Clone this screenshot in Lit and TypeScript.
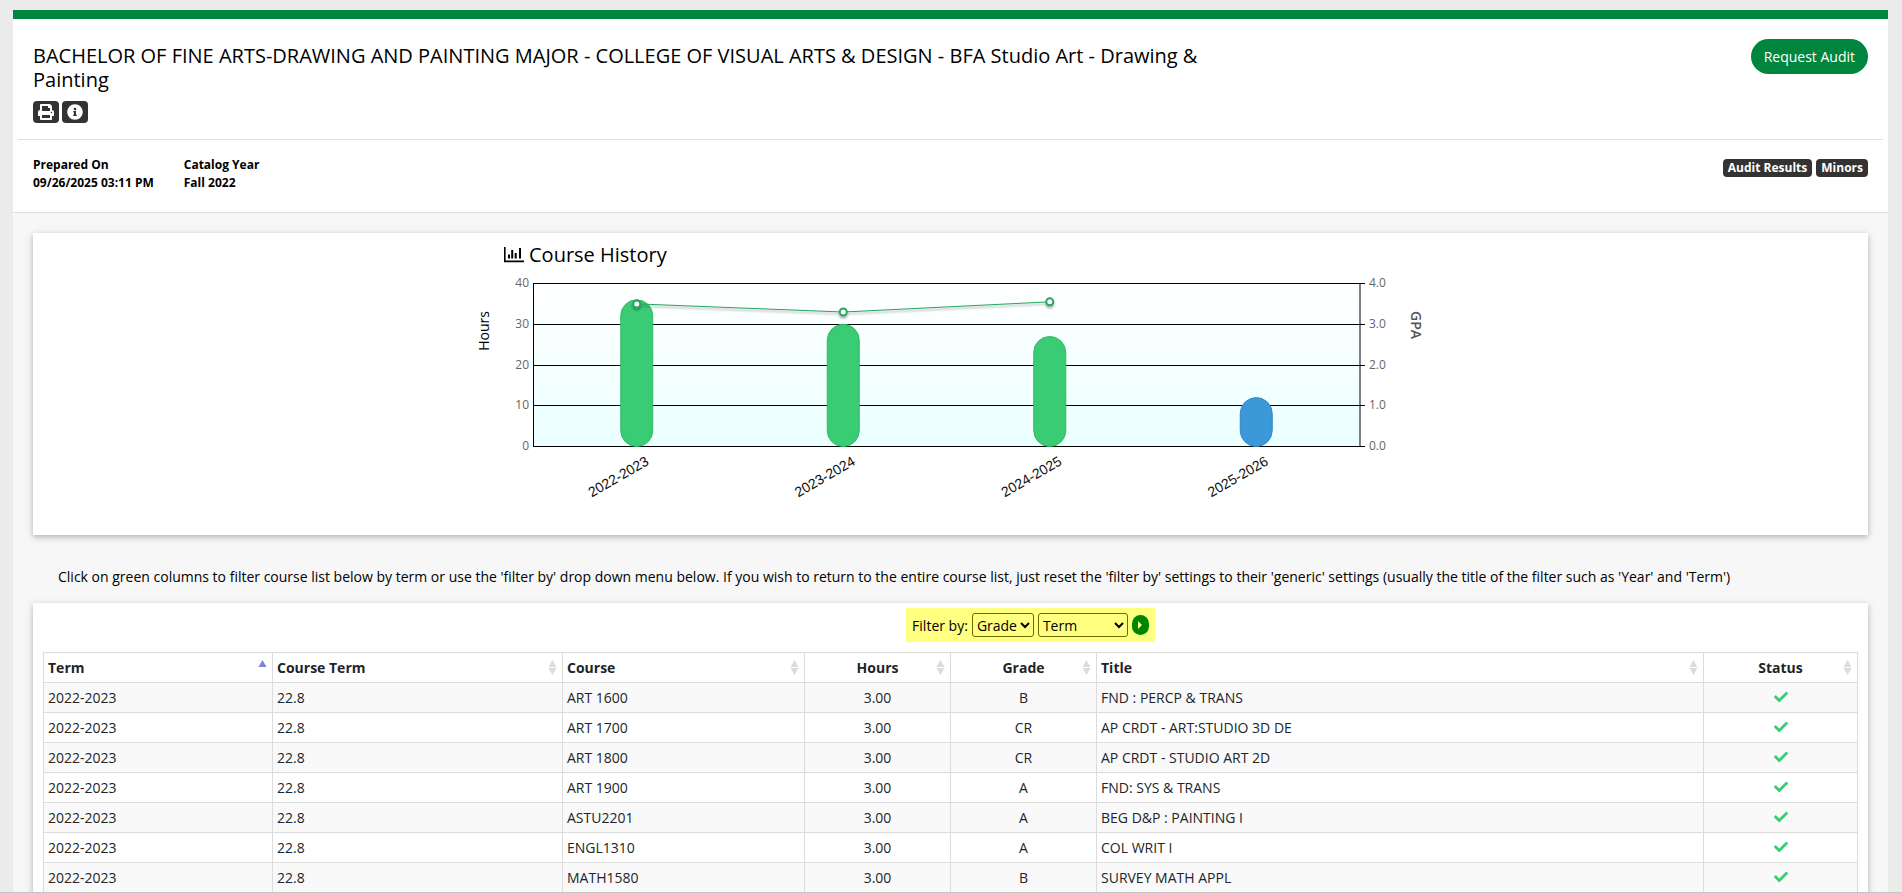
import { LitElement, html, svg, css } from "lit";
import { customElement, state } from "lit/decorators.js";
import { classMap } from "lit/directives/class-map.js";

interface Course {
  term: string;
  courseTerm: string;
  course: string;
  hours: string;
  grade: string;
  title: string;
}

interface YearBar {
  year: string;
  hours: number;
  gpa: number | null;
  current: boolean;
}

const course = (name: string, grade: string, title: string): Course => ({
  term: "2022-2023",
  courseTerm: "22.8",
  course: name,
  hours: "3.00",
  grade,
  title,
});

const COURSES: Course[] = [
  course("ART 1600", "B", "FND : PERCP & TRANS"),
  course("ART 1700", "CR", "AP CRDT - ART:STUDIO 3D DE"),
  course("ART 1800", "CR", "AP CRDT - STUDIO ART 2D"),
  course("ART 1900", "A", "FND: SYS & TRANS"),
  course("ASTU2201", "A", "BEG D&P : PAINTING I"),
  course("ENGL1310", "A", "COL WRIT I"),
  course("MATH1580", "B", "SURVEY MATH APPL"),
];

const COLUMNS = [
  { key: "term", label: "Term", centered: false },
  { key: "course-term", label: "Course Term", centered: false },
  { key: "course", label: "Course", centered: false },
  { key: "hours", label: "Hours", centered: true },
  { key: "grade", label: "Grade", centered: true },
  { key: "title", label: "Title", centered: false },
  { key: "status", label: "Status", centered: true },
];

const YEARS: YearBar[] = [
  { year: "2022-2023", hours: 36, gpa: 3.5, current: false },
  { year: "2023-2024", hours: 30, gpa: 3.3, current: false },
  { year: "2024-2025", hours: 27, gpa: 3.55, current: false },
  { year: "2025-2026", hours: 12, gpa: null, current: true },
];

/** Combined chart: hours per year as rounded bars, GPA as a line. */
@customElement("course-chart")
export class CourseChart extends LitElement {
  static styles = css`
    :host {
      display: block;
      font-family: "Open Sans", sans-serif;
    }
    .plot {
      display: block;
      width: 100%;
      height: auto;
    }
    .grid {
      stroke: #000;
      stroke-width: 1;
    }
    .tick {
      font-size: 12px;
      fill: #666;
    }
    .axis-title {
      font-size: 14px;
      fill: #000;
    }
    .axis-title.side {
      fill: #555;
      font-weight: 600;
    }
    .year {
      font-family: "Liberation Sans", Arial, sans-serif;
      font-size: 14px;
      fill: #111;
    }
    .bar {
      fill: #3acc74;
      stroke: #33b768;
      cursor: pointer;
    }
    .bar.current {
      fill: #3b99d9;
      stroke: #3089c8;
    }
    .line {
      fill: none;
      stroke: #27a45b;
      stroke-width: 1;
    }
    .dot {
      fill: #fff;
      stroke: #27a45b;
      stroke-width: 2;
    }
  `;

  private readonly left = 63;
  private readonly right = 890;
  private readonly top = 13;
  private readonly bottom = 176;

  private y(share: number) {
    return this.bottom + 0.5 - share * (this.bottom - this.top);
  }

  private x(index: number) {
    const step = (this.right - this.left - 1) / YEARS.length;
    return this.left + 0.5 + step * (index + 0.5);
  }

  render() {
    const graded = YEARS.map((d, i) => ({ x: this.x(i), gpa: d.gpa })).filter(
      (d) => d.gpa !== null
    );
    const points = graded.map((d) => `${d.x},${this.y(d.gpa! / 4)}`);
    return html`
      <svg class="plot" viewBox="0 0 961 255" role="img" aria-label="Hours and GPA by year">
        <defs>
          <linearGradient id="sky" x1="0" y1="0" x2="0" y2="1">
            <stop offset="0" stop-color="#ffffff"></stop>
            <stop offset="1" stop-color="#ebffff"></stop>
          </linearGradient>
          <filter id="shade" x="-5%" y="-50%" width="110%" height="250%">
            <feDropShadow dx="0" dy="2" stdDeviation="1" flood-color="#000" flood-opacity="0.35"></feDropShadow>
          </filter>
        </defs>
        <rect x=${this.left} y=${this.top} width=${this.right - this.left} height=${this.bottom - this.top} fill="url(#sky)"></rect>
        ${[0, 1, 2, 3, 4].map((n) => {
          const y = Math.floor(this.y(n / 4)) + 0.5;
          return svg`
            <line class="grid" x1=${this.left} x2=${this.right + 5} y1=${y} y2=${y}></line>
            <text class="tick" text-anchor="end" x=${this.left - 4} y=${y + 3.5}>${n * 10}</text>
            <text class="tick" x=${this.right + 9} y=${y + 3.5}>${n.toFixed(1)}</text>`;
        })}
        <line class="grid" x1=${this.left + 0.5} x2=${this.left + 0.5} y1=${this.top} y2=${this.bottom}></line>
        <line class="grid" x1=${this.right} x2=${this.right} y1=${this.top} y2=${this.bottom}></line>
        ${YEARS.map((d, i) => {
          const top = this.y(d.hours / 40);
          return svg`
            <rect class="bar ${d.current ? "current" : ""}" x=${this.x(i) - 16} y=${top}
              width="32" height=${this.bottom + 0.5 - top} rx="16"></rect>
            <text class="year" text-anchor="end"
              transform="translate(${this.x(i) + 13} 194) rotate(-30)">${d.year}</text>`;
        })}
        <g filter="url(#shade)">
          <polyline class="line" points=${points.join(" ")}></polyline>
          ${graded.map(
            (d) => svg`<circle class="dot" cx=${d.x} cy=${this.y(d.gpa! / 4)} r="3.5"></circle>`
          )}
        </g>
        <text class="axis-title" text-anchor="middle" transform="translate(19 61) rotate(-90)">Hours</text>
        <text class="axis-title side" text-anchor="middle" transform="translate(941 55) rotate(90)">GPA</text>
      </svg>
    `;
  }
}

@customElement("app-root")
export class AppRoot extends LitElement {
  static styles = css`
    :host {
      display: block;
      box-sizing: border-box;
      height: 100vh;
      overflow: hidden;
      background: #ebebeb;
      border-bottom: 1px solid #c4c4c4;
      padding: 10px 14px 0 13px;
      font-family: "Open Sans", sans-serif;
      font-size: 14px;
      line-height: 21px;
      color: #000;
    }
    * {
      box-sizing: border-box;
    }
    button,
    select {
      font: inherit;
      color: inherit;
      margin: 0;
    }
    button {
      border: 0;
      padding: 0;
      background: none;
      cursor: pointer;
    }
    .page {
      background: #f7f7f7;
      border-top: 9px solid #00853e;
      min-height: 100%;
    }
    .head {
      background: #fff;
      border-bottom: 1px solid #dee2e6;
      padding: 0 5px;
    }
    .head-row {
      display: flex;
      justify-content: space-between;
      align-items: flex-start;
      padding: 20px 15px 16px;
    }
    .head-row + .head-row {
      border-top: 1px solid #dee2e6;
      padding-bottom: 20px;
      padding-top: 16px;
    }
    .program {
      width: 65%;
      padding-top: 5px;
    }
    .program-name {
      margin: 0 0 9px;
      font-size: 20px;
      line-height: 24px;
      font-weight: 400;
    }
    .tools {
      display: flex;
      gap: 3px;
    }
    .tool {
      display: flex;
      align-items: center;
      justify-content: center;
      width: 26px;
      height: 22px;
      border-radius: 4px;
      background: #333;
      color: #fff;
    }
    .tool svg {
      width: 16px;
      height: 16px;
      fill: currentColor;
    }
    .request {
      height: 35px;
      padding: 0 13px;
      border-radius: 18px;
      background: #00853e;
      color: #fff;
    }
    .facts {
      display: flex;
      gap: 30px;
      margin: 0;
      font-size: 12px;
      line-height: 18px;
      font-weight: 700;
    }
    .facts dd {
      margin: 0;
    }
    .badges {
      display: flex;
      gap: 4px;
      padding-top: 3px;
    }
    .badge {
      padding: 0 5px;
      border-radius: 4px;
      background: #333;
      color: #fff;
      font-size: 12px;
      line-height: 18px;
      font-weight: 700;
      text-decoration: none;
    }
    .content {
      padding: 20px;
    }
    .card {
      background: #fff;
      box-shadow: 0 2px 5px rgba(0, 0, 0, 0.2), 0 2px 10px rgba(0, 0, 0, 0.1);
    }
    .history {
      padding: 10px 0;
    }
    .history-body {
      width: 961px;
      max-width: 100%;
      margin: 0 auto;
    }
    .history-title {
      display: flex;
      gap: 5px;
      align-items: center;
      margin: 0 0 3px;
      padding-left: 34px;
      font-size: 20px;
      line-height: 24px;
      font-weight: 400;
    }
    .history-title svg {
      width: 20px;
      height: 16px;
    }
    .hint {
      margin: 0;
      padding: 31px 25px 16px;
    }
    .courses {
      padding: 5px 10px 20px;
    }
    .filter-row {
      display: flex;
      justify-content: center;
      padding: 0 0 10px 160px;
    }
    .filter {
      display: flex;
      align-items: center;
      gap: 4px;
      padding: 5px 6px;
      background: #ffff80;
    }
    .filter select {
      height: 24px;
      border: 1px solid #6b6b00;
      border-radius: 3px;
      background-color: transparent;
    }
    .by-grade {
      width: 62px;
    }
    .by-term {
      width: 90px;
    }
    .go {
      display: flex;
      align-items: center;
      justify-content: center;
      width: 17px;
      height: 20px;
      border-radius: 9px;
      background: #008500;
    }
    .go svg {
      width: 4px;
      height: 8px;
      fill: #ffff80;
    }
    .list {
      width: 100%;
      table-layout: fixed;
      border-collapse: collapse;
      color: #212529;
    }
    .list th,
    .list td {
      border: 1px solid #dcdcdc;
      padding: 4px;
      text-align: left;
    }
    .list th {
      padding: 0;
    }
    .list tbody tr:nth-child(odd) {
      background: #f9f9f9;
    }
    .col-term {
      width: 229px;
    }
    .col-course-term {
      width: 290px;
    }
    .col-course {
      width: 242px;
    }
    .col-hours,
    .col-grade {
      width: 146px;
    }
    .col-status {
      width: 154px;
    }
    .sort {
      display: block;
      position: relative;
      width: 100%;
      padding: 4px;
      text-align: left;
      font-weight: 700;
    }
    .list .centered {
      text-align: center;
    }
    .arrows {
      position: absolute;
      right: 5px;
      top: 7px;
      width: 9px;
      height: 15px;
      fill: #dcdcdc;
    }
    .arrows.sorted {
      fill: #7d82de;
    }
    .check {
      display: block;
      width: 14px;
      height: 14px;
      margin: 0 auto 2px;
      fill: #3acc74;
    }
  `;

  @state() private sorted = "term";

  private renderHeader(c: (typeof COLUMNS)[number]) {
    const active = this.sorted === c.key;
    return html`
      <th class="col-${c.key}" scope="col">
        <button
          class=${classMap({ sort: true, centered: c.centered })}
          @click=${() => (this.sorted = c.key)}
        >
          ${c.label}
          <svg class=${classMap({ arrows: true, sorted: active })} viewBox="0 0 9 15" aria-hidden="true">
            <path d="M4.5 0 8.5 7h-8z"></path>
            ${active ? "" : svg`<path d="M.5 8h8l-4 7z"></path>`}
          </svg>
        </button>
      </th>
    `;
  }

  private renderCourse(c: Course) {
    return html`
      <tr>
        <td>${c.term}</td>
        <td>${c.courseTerm}</td>
        <td>${c.course}</td>
        <td class="centered">${c.hours}</td>
        <td class="centered">${c.grade}</td>
        <td>${c.title}</td>
        <td>
          <svg class="check" viewBox="0 0 512 512" role="img" aria-label="Complete">
            <path d="M173.898 439.404l-166.4-166.4c-9.997-9.997-9.997-26.206 0-36.204l36.203-36.204c9.997-9.998 26.207-9.998 36.204 0L192 312.69 432.095 72.596c9.997-9.997 26.207-9.997 36.204 0l36.203 36.204c9.997 9.997 9.997 26.206 0 36.204l-294.4 294.401c-9.998 9.997-26.207 9.997-36.204-.001z"></path>
          </svg>
        </td>
      </tr>
    `;
  }

  render() {
    return html`
      <main class="page">
        <header class="head">
          <div class="head-row">
            <div class="program">
              <h1 class="program-name">
                BACHELOR OF FINE ARTS-DRAWING AND PAINTING MAJOR - COLLEGE OF VISUAL ARTS &amp; DESIGN -
                BFA Studio Art - Drawing &amp; Painting
              </h1>
              <div class="tools">
                <button class="tool" aria-label="Print">
                  <svg viewBox="0 0 512 512" aria-hidden="true">
                    <path d="M448 192V77.25c0-8.49-3.37-16.62-9.37-22.63L393.37 9.37c-6-6-14.14-9.37-22.63-9.37H96C78.33 0 64 14.33 64 32v160c-35.35 0-64 28.65-64 64v112c0 8.84 7.16 16 16 16h48v96c0 17.67 14.33 32 32 32h320c17.67 0 32-14.33 32-32v-96h48c8.84 0 16-7.16 16-16V256c0-35.35-28.65-64-64-64zm-64 256H128v-96h256v96zm0-224H128V64h192v48c0 8.84 7.16 16 16 16h48v96zm48 72c-13.25 0-24-10.75-24-24 0-13.26 10.75-24 24-24s24 10.74 24 24c0 13.25-10.75 24-24 24z"></path>
                  </svg>
                </button>
                <button class="tool" aria-label="Information">
                  <svg viewBox="0 0 512 512" aria-hidden="true">
                    <path d="M256 8C119.043 8 8 119.083 8 256c0 136.997 111.043 248 248 248s248-111.003 248-248C504 119.083 392.957 8 256 8zm0 110c23.196 0 42 18.804 42 42s-18.804 42-42 42-42-18.804-42-42 18.804-42 42-42zm56 254c0 6.627-5.373 12-12 12h-88c-6.627 0-12-5.373-12-12v-24c0-6.627 5.373-12 12-12h12v-64h-12c-6.627 0-12-5.373-12-12v-24c0-6.627 5.373-12 12-12h64c6.627 0 12 5.373 12 12v100h12c6.627 0 12 5.373 12 12v24z"></path>
                  </svg>
                </button>
              </div>
            </div>
            <button class="request">Request Audit</button>
          </div>
          <div class="head-row">
            <dl class="facts">
              <div>
                <dt>Prepared On</dt>
                <dd>09/26/2025 03:11 PM</dd>
              </div>
              <div>
                <dt>Catalog Year</dt>
                <dd>Fall 2022</dd>
              </div>
            </dl>
            <nav class="badges">
              <a class="badge" href="#audit">Audit Results</a>
              <a class="badge" href="#minors">Minors</a>
            </nav>
          </div>
        </header>

        <div class="content">
          <section class="card history">
            <div class="history-body">
              <h2 class="history-title">
                <svg viewBox="0 0 20 16" aria-hidden="true">
                  <path d="M0 0h1.6v13.6H20v1.7H0zM4 7.6h2v4H4zM7.2 3h2v8.600h-2zM10.700 6h2v5.600h-2zM15 1h2v10.600h-2z"></path>
                </svg>
                Course History
              </h2>
              <course-chart></course-chart>
            </div>
          </section>

          <p class="hint">
            Click on green columns to filter course list below by term or use the 'filter by' drop down menu
            below. If you wish to return to the entire course list, just reset the 'filter by' settings to
            their 'generic' settings (usually the title of the filter such as 'Year' and 'Term')
          </p>

          <section class="card courses">
            <div class="filter-row">
              <div class="filter">
                <label for="grade">Filter by:</label>
                <select id="grade" class="by-grade">
                  <option>Grade</option>
                </select>
                <select id="term" class="by-term" aria-label="Term">
                  <option>Term</option>
                </select>
                <button class="go" aria-label="Apply filter">
                  <svg viewBox="0 0 4 8" aria-hidden="true"><path d="M0 0l4 4-4 4z"></path></svg>
                </button>
              </div>
            </div>
            <table class="list">
              <thead>
                <tr>
                  ${COLUMNS.map((c) => this.renderHeader(c))}
                </tr>
              </thead>
              <tbody>
                ${COURSES.map((c) => this.renderCourse(c))}
              </tbody>
            </table>
          </section>
        </div>
      </main>
    `;
  }
}
